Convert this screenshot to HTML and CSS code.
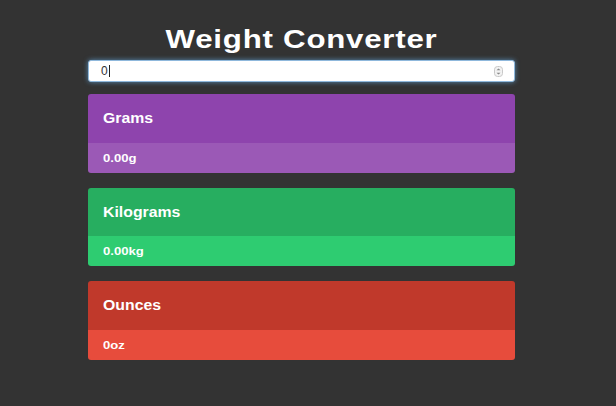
FILE: index.html
```html
<!DOCTYPE html>
<html>
<head>
<meta charset="utf-8">
<link rel="stylesheet" href="styles.css">
</head>
<body>
<main class="wrap">
  <h1 class="title">Weight Converter</h1>
  <div class="field">
    <span class="value">0</span><span class="caret"></span>
    <svg class="spin" width="9" height="11" viewBox="0 0 9 11"><rect x="0.5" y="0.5" width="8" height="10" rx="3" fill="#f2f2f2" stroke="#c8c8c8"/><path d="M2.5 4.3 L4.5 2.5 L6.5 4.3Z M2.5 6.7 L4.5 8.5 L6.5 6.7Z" fill="#888"/></svg>
  </div>
  <section class="card grams">
    <div class="card-head"><span class="txt">Grams</span></div>
    <div class="card-body"><span class="txt">0.00g</span></div>
  </section>
  <section class="card kilos">
    <div class="card-head"><span class="txt">Kilograms</span></div>
    <div class="card-body"><span class="txt">0.00kg</span></div>
  </section>
  <section class="card ounces">
    <div class="card-head"><span class="txt">Ounces</span></div>
    <div class="card-body"><span class="txt">0oz</span></div>
  </section>
</main>
</body>
</html>
```
FILE: styles.css
```css
html, body {
  margin: 0;
  padding: 0;
  background: #333333;
  height: 100%;
}
body {
  font-family: "Liberation Sans", Arial, sans-serif;
  color: #fff;
}
.wrap {
  width: 427px;
  margin-left: 88px;
  padding-top: 24px;
  display: flex;
  flex-direction: column;
}
.title {
  margin: 0 0 6px;
  font-size: 25px;
  line-height: 30px;
  height: 30px;
  font-weight: bold;
  letter-spacing: 0.6px;
  text-align: center;
  color: #fff;
  transform: scaleX(1.25);
}
.field {
  height: 22px;
  box-sizing: border-box;
  background: #fff;
  border: 1px solid #8fb8dc;
  border-radius: 3px;
  box-shadow: 0 0 5px rgba(102, 175, 233, 0.7);
  display: flex;
  align-items: center;
  padding: 0 11px 0 12px;
  color: #333;
  font-size: 12px;
  margin-bottom: 12px;
}
.caret {
  width: 1px;
  height: 12px;
  background: #222;
  margin-left: 1px;
}
.spin {
  margin-left: auto;
}
.card {
  border-radius: 3px;
  overflow: hidden;
  margin-bottom: 15px;
  font-weight: bold;
}
.card-head {
  height: 48.5px;
  display: flex;
  align-items: center;
  padding-left: 15px;
  font-size: 14px;
}
.card-head .txt {
  transform: scaleX(1.13);
}
.card-body {
  height: 30px;
  display: flex;
  align-items: center;
  padding-left: 15px;
  font-size: 11.5px;
}
.card-body .txt {
  transform: scaleX(1.14);
}
.txt {
  display: inline-block;
  transform-origin: left center;
}
.grams .card-head { background: #8e44ad; }
.grams .card-body { background: #9b59b6; }
.kilos .card-head { background: #27ae60; }
.kilos .card-body { background: #2ecc71; }
.ounces .card-head { background: #c0392b; }
.ounces .card-body { background: #e74c3c; }
```
